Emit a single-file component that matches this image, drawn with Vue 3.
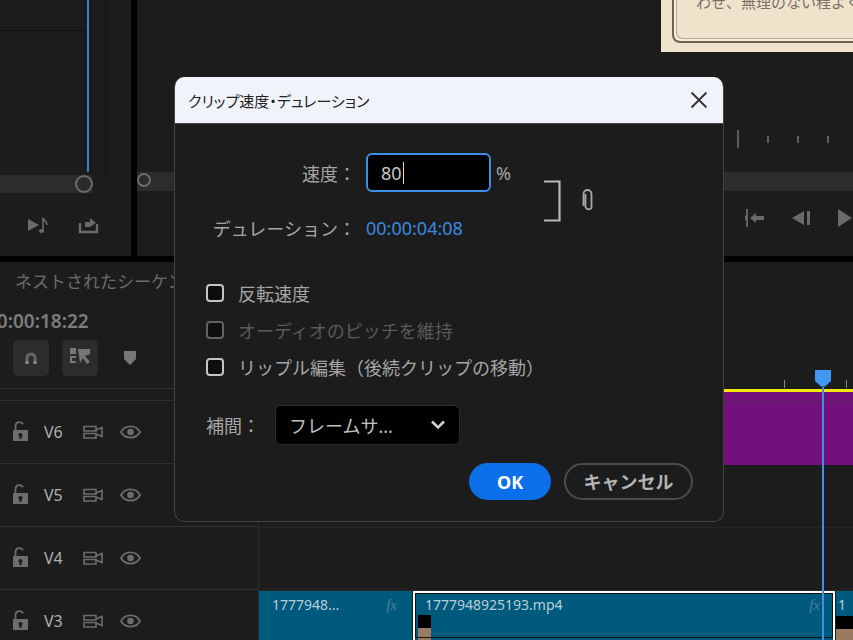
<template>
  <div class="screen">
    <div class="top">
      <section class="source">
        <div class="source-view">
          <div class="source-rule"></div>
          <div class="source-head"></div>
        </div>
        <div class="source-bar"><span class="knob"></span></div>
        <div class="source-tools">
          <svg width="22" height="20" viewBox="0 0 22 20">
            <path d="M1 4l11 6-11 6z" fill="#6a6a6a" />
            <path d="M16 16V3c1 3 4 3 4 7" fill="none" stroke="#6a6a6a" stroke-width="1.6" />
            <ellipse cx="14.5" cy="16" rx="2.5" ry="2" fill="#6a6a6a" />
          </svg>
          <svg width="21" height="18" viewBox="0 0 21 18">
            <path d="M2 7v9h17V8" fill="none" stroke="#6a6a6a" stroke-width="2.4" />
            <path d="M7 11V6h5V2l6 5-6 4z" fill="#6a6a6a" />
          </svg>
        </div>
      </section>
      <section class="program">
        <div class="program-view">
          <div class="paper">
            <div class="paper-frame"><span class="paper-text">わせ、無理のない程よく調整</span></div>
          </div>
        </div>
        <div class="ruler">
          <i class="tick tall"></i>
          <i v-for="n in ticks" :key="n" class="tick"></i>
        </div>
        <div class="program-bar"><span class="knob"></span></div>
        <div class="program-tools">
          <svg width="20" height="20" viewBox="0 0 20 20">
            <path d="M2 1v18M2 10l-2-2M2 10l-2 2" fill="none" stroke="#6a6a6a" stroke-width="1.8" />
            <path d="M5 10l6-5v3h8v4h-8v3z" fill="#6a6a6a" />
          </svg>
          <svg width="19" height="14" viewBox="0 0 19 14">
            <path d="M0 7l12-7v14z" fill="#6a6a6a" />
            <rect x="15" width="3" height="14" fill="#6a6a6a" />
          </svg>
          <svg width="14" height="18" viewBox="0 0 14 18">
            <path d="M0 0l14 9-14 9z" fill="#6a6a6a" />
          </svg>
        </div>
      </section>
    </div>

    <section class="bottom">
      <aside class="headers">
        <div class="tab">ネストされたシーケンス</div>
        <div class="timecode">00:00:18:22</div>
        <div class="tools">
          <span class="tool-btn">
            <svg width="16" height="16" viewBox="0 0 16 16">
              <path d="M2.5 14V8a5.500 5.500 0 0 1 11 0v6h-3V8a2.500 2.500 0 0 0-5 0v6z" fill="#666" />
              <path d="M2.500 11h3v3h-3zM10.500 11h3v3h-3z" fill="#8a8a8a" />
            </svg>
          </span>
          <span class="tool-btn">
            <svg width="24" height="24" viewBox="0 0 24 24">
              <rect x="2" y="2" width="6" height="6" fill="#777" />
              <path d="M2 10h6v2H4v3h4v2H2z" fill="#777" />
              <path d="M10 3l12 0v5l-5 2 5 6-3 2-4-6-3 5z" fill="#777" />
            </svg>
          </span>
          <svg class="marker" width="14" height="16" viewBox="0 0 14 16">
            <path d="M1 1h12v8l-6 6-6-6z" fill="#777" />
          </svg>
        </div>
        <div class="track-rule"></div>
        <div v-for="t in tracks" :key="t" class="track">
          <svg width="17" height="22" viewBox="0 0 17 22">
            <path d="M3.500 9V5a4 4 0 0 1 7.500-1.800" fill="none" stroke="#6d6d6d" stroke-width="1.800" />
            <path d="M1 9h15v11H1z" fill="#6d6d6d" />
            <circle cx="8.500" cy="14" r="2" fill="#1c1c1c" />
            <rect x="7.500" y="14" width="2" height="4" fill="#1c1c1c" />
          </svg>
          <span class="track-name">{{ t }}</span>
          <svg width="20" height="15" viewBox="0 0 20 15">
            <path d="M1 1.500h12v4.500H1zM1 8.500h12V13H1zM13 5l6-2.500v9L13 9" fill="none" stroke="#6d6d6d" stroke-width="1.600" />
          </svg>
          <svg width="21" height="14" viewBox="0 0 21 14">
            <path d="M1 7c4-7.500 15-7.500 19 0-4 7.500-15 7.500-19 0z" fill="none" stroke="#6d6d6d" stroke-width="1.800" />
            <circle cx="10.500" cy="7" r="3.300" fill="#6d6d6d" />
          </svg>
        </div>
      </aside>

      <div class="timeline">
        <div class="time-ruler">
          <i class="rt" style="left: 525px"></i>
          <i class="rt" style="left: 587px"></i>
        </div>
        <div class="work-bar"></div>
        <div class="band-v6"><div class="band-line"></div></div>
        <div class="spacer-v5"></div>
        <div class="spacer-v4"></div>
        <div class="clips">
          <div class="clip first">
            <span>1777948...</span><em>fx</em>
          </div>
          <div class="clip picked">
            <div class="clip-title"><span>1777948925193.mp4</span><em>fx</em></div>
            <div class="thumb"></div>
          </div>
          <div class="clip next"><span>1</span><div class="thumb"></div></div>
        </div>
        <div class="playhead">
          <svg width="18" height="17" viewBox="0 0 18 17">
            <path d="M1 0h16v11l-6 5.500H7L1 11z" fill="#3f98f4" />
          </svg>
          <div class="playhead-line"></div>
        </div>
      </div>
    </section>

    <div class="dialog">
      <header class="dialog-title">
        <span>クリップ速度・デュレーション</span>
        <svg width="18" height="18" viewBox="0 0 18 18">
          <path d="M1.500 1.500l15 15M16.500 1.500l-15 15" fill="none" stroke="#333" stroke-width="1.800" />
        </svg>
      </header>
      <div class="dialog-body">
        <div class="speed">
          <div class="speed-grid">
            <label>速度：</label>
            <div class="speed-input">
              <div class="input-box">80<i class="caret"></i></div>
              <span>%</span>
            </div>
            <label>デュレーション：</label>
            <div class="duration">00:00:04:08</div>
          </div>
          <svg class="bracket" width="17" height="42" viewBox="0 0 17 42">
            <path d="M0 1.500h15.500v39H0" fill="none" stroke="#b8b8b8" stroke-width="2.200" />
          </svg>
          <svg class="link" width="12" height="24" viewBox="0 0 12 24">
            <path d="M3.500 6v13a3.500 3.500 0 0 0 6 1V6a4 4 0 0 0-8 0v12" fill="none" stroke="#a8a8a8" stroke-width="1.800" />
          </svg>
        </div>

        <div class="checks">
          <div v-for="c in checks" :key="c.text" class="check" :class="{ off: c.off }">
            <span class="box"></span>
            <span>{{ c.text }}</span>
          </div>
        </div>

        <div class="interp">
          <label>補間：</label>
          <div class="select">
            <span>フレームサ...</span>
            <svg width="16" height="10" viewBox="0 0 16 10">
              <path d="M2 1.500l6 6 6-6" fill="none" stroke="#d0d0d0" stroke-width="2.600" />
            </svg>
          </div>
        </div>

        <div class="actions">
          <button class="btn ok">OK</button>
          <button class="btn cancel">キャンセル</button>
        </div>
      </div>
    </div>
  </div>
</template>

<script setup>
const ticks = [1, 2, 3, 4]
const tracks = ['V6', 'V5', 'V4', 'V3']
const checks = [
  { text: '反転速度' },
  { text: 'オーディオのピッチを維持', off: true },
  { text: 'リップル編集（後続クリップの移動）' },
]
</script>

<style>
html, body {
  margin: 0;
  background: #000;
}
</style>

<style scoped>
.screen {
  position: relative;
  width: 853px;
  height: 640px;
  overflow: hidden;
  background: #000;
  font-family: "Noto Sans", "Noto Sans CJK JP", sans-serif;
  color: #aaa;
}

.top {
  display: flex;
  gap: 6px;
  height: 256px;
}

.source {
  width: 131px;
  background: #1c1c1c;
  flex-shrink: 0;
}

.source-view {
  position: relative;
  width: 106px;
  height: 175px;
  border-right: 1px solid #141414;
  box-sizing: border-box;
}

.source-rule {
  height: 30px;
  border-bottom: 1px solid #111;
  width: 92px;
}

.source-head {
  position: absolute;
  left: 87px;
  top: 0;
  width: 2px;
  height: 172px;
  background: #3a7fd0;
}

.source-bar {
  position: relative;
  width: 92px;
  height: 18px;
  background: #2c2c2c;
}

.knob {
  position: absolute;
  width: 14px;
  height: 14px;
  border: 2px solid #6c6c6c;
  border-radius: 50%;
  box-sizing: border-box;
  top: 1px;
}

.source-bar .knob {
  left: 75px;
  width: 18px;
  height: 18px;
  top: 0;
}

.source-tools {
  display: flex;
  align-items: center;
  gap: 29px;
  padding: 22px 0 0 27px;
}

.program {
  flex: 1;
  background: #1c1c1c;
  min-width: 0;
}

.program-view {
  display: flex;
  justify-content: flex-end;
  height: 130px;
}

.paper {
  width: 192px;
  height: 52px;
  box-sizing: border-box;
  padding: 0 0 9px 11px;
  background: #efe3cc;
  overflow: hidden;
}

.paper-frame {
  height: 100%;
  border: solid #6f6350;
  border-width: 0 0 2px 2px;
  border-radius: 0 0 0 8px;
  box-sizing: border-box;
  box-shadow: inset 2px -2px 0 #f6efdf, inset 3px -3px 0 #b5ac9b;
  padding-left: 22px;
  white-space: nowrap;
  overflow: hidden;
}

.paper-text {
  display: block;
  margin-top: -8px;
  font-size: 15px;
  line-height: 20px;
  color: #77706a;
}

.ruler {
  display: flex;
  align-items: center;
  gap: 28px;
  height: 18px;
  padding-left: 600px;
}

.tick {
  width: 2px;
  height: 7px;
  background: #5e5e5e;
  flex-shrink: 0;
}

.tick.tall {
  height: 18px;
}

.program-bar {
  margin-top: 24px;
  height: 19px;
  background: #2c2c2c;
  position: relative;
}

.program-tools {
  display: flex;
  align-items: center;
  gap: 27px;
  padding: 17px 0 0 608px;
}

.bottom {
  display: flex;
  margin-top: 6px;
  height: 378px;
  background: #1c1c1c;
}

.headers {
  width: 258px;
  flex-shrink: 0;
  border-right: 1px solid #2a2a2a;
  box-sizing: content-box;
}

.tab {
  padding: 8px 0 0 15px;
  height: 29px;
  font-size: 17px;
  line-height: 24px;
  color: #6c6c6c;
  white-space: nowrap;
}

.timecode {
  margin-left: -14px;
  margin-top: 7px;
  height: 30px;
  font-size: 19px;
  line-height: 30px;
  font-weight: 600;
  color: #7d7d7d;
  white-space: nowrap;
}

.tools {
  display: flex;
  align-items: center;
  gap: 13px;
  height: 36px;
  margin-top: 4px;
  padding-left: 13px;
}

.tool-btn {
  display: flex;
  align-items: center;
  justify-content: center;
  width: 36px;
  height: 36px;
  border-radius: 5px;
  background: #2c2c2c;
}

.marker {
  margin-left: 12px;
}

.track-rule {
  height: 11px;
  margin-top: 12px;
  border-top: 1px solid #303030;
}

.track {
  display: flex;
  align-items: center;
  height: 62px;
  border-top: 1px solid #303030;
  padding-left: 12px;
}

.track-name {
  width: 39px;
  margin-left: 15px;
  font-size: 16px;
  color: #b0b0b0;
}

.track svg:last-child {
  margin-left: 17px;
}

.timeline {
  position: relative;
  flex: 1;
  min-width: 0;
}

.time-ruler {
  position: relative;
  height: 127px;
}

.rt {
  position: absolute;
  bottom: 1px;
  width: 1px;
  height: 8px;
  background: #888;
}

.work-bar {
  height: 3px;
  background: #f2e800;
}

.band-v6 {
  height: 73px;
  background: #74107e;
}

.band-line {
  height: 9px;
  border-bottom: 1px solid #5d2a66;
}

.spacer-v5,
.spacer-v4 {
  height: 63px;
  border-bottom: 1px solid #262626;
  box-sizing: border-box;
}

.clips {
  display: flex;
  height: 49px;
  gap: 1px;
}

.clip {
  position: relative;
  background: #005a7e;
  font-size: 14px;
  line-height: 20px;
  color: #b9cdd6;
  box-sizing: border-box;
  overflow: hidden;
}

.clip em {
  font-family: "Liberation Serif", serif;
  font-size: 15px;
  color: #4d7f97;
}

.first {
  display: flex;
  justify-content: space-between;
  width: 153px;
  padding: 4px 15px 0 13px;
}

.picked {
  width: 422px;
  border: solid #fff;
  border-width: 2px 2px 0;
  padding: 2px 0 0 3px;
  outline: 1px solid #111;
  outline-offset: -3px;
}

.clip-title {
  display: flex;
  justify-content: space-between;
  padding: 0 13px 0 7px;
  height: 20px;
}

.thumb {
  width: 13px;
  height: 25px;
  background: linear-gradient(#000 0 13px, #9a7a60 13px);
}

.next {
  flex: 1;
  padding: 4px 0 0 2px;
}

.next .thumb {
  margin: 1px 0 0 -2px;
  width: 20px;
}

.playhead {
  position: absolute;
  left: 555px;
  top: 108px;
  display: flex;
  flex-direction: column;
  align-items: center;
  width: 18px;
}

.playhead-line {
  width: 1.500px;
  height: 255px;
  background: #3f8fe8;
}

.dialog {
  position: absolute;
  left: 174px;
  top: 77px;
  width: 550px;
  height: 445px;
  display: flex;
  flex-direction: column;
  box-sizing: border-box;
  border-radius: 10px;
  overflow: hidden;
  border: 1px solid #424242;
  border-top: 0;
  background: #1c1c1c;
}

.dialog-title {
  display: flex;
  align-items: center;
  justify-content: space-between;
  flex-shrink: 0;
  height: 47px;
  padding: 0 15px 0 13px;
  background: #f0f3f9;
  border-bottom: 1px solid #444;
  box-sizing: border-box;
  color: #222;
  font-size: 15px;
  font-feature-settings: "palt";
  white-space: nowrap;
}

.dialog-body {
  flex: 1;
  padding: 29px 30px 0 31px;
  font-size: 18px;
  color: #a6a6a6;
}

.speed {
  display: flex;
  height: 95px;
}

.speed-grid {
  display: grid;
  grid-template-columns: 150px auto;
  grid-template-rows: 39px 38px;
  column-gap: 10px;
  row-gap: 17px;
  align-items: center;
}

.speed-grid label {
  text-align: right;
  white-space: nowrap;
}

.speed-input {
  display: flex;
  align-items: center;
  gap: 5px;
}

.input-box {
  display: flex;
  align-items: center;
  box-sizing: border-box;
  width: 125px;
  height: 39px;
  padding-left: 13px;
  border: 2px solid #3a8fe8;
  border-radius: 6px;
  background: #000;
  color: #c6c6c6;
}

.caret {
  width: 1.500px;
  height: 22px;
  background: #ddd;
  margin-left: 1px;
}

.duration {
  color: #3a8ae0;
  white-space: nowrap;
}

.bracket {
  margin: 27px 0 0 33px;
}

.link {
  margin: 35px 0 0 21px;
}

.checks {
  display: flex;
  flex-direction: column;
  gap: 11px;
  margin-top: 32px;
}

.check {
  display: flex;
  align-items: center;
  gap: 14px;
  height: 26px;
  white-space: nowrap;
}

.check.off {
  color: #5a5a5a;
}

.box {
  width: 18px;
  height: 18px;
  box-sizing: border-box;
  border: 2.500px solid #c4c4c4;
  border-radius: 4px;
  background: #0d0d0d;
}

.off .box {
  border-color: #626262;
}

.interp {
  display: flex;
  align-items: center;
  gap: 15px;
  margin-top: 25px;
}

.select {
  display: flex;
  align-items: center;
  justify-content: space-between;
  box-sizing: border-box;
  width: 185px;
  height: 40px;
  padding: 0 13px 0 13px;
  background: #000;
  border: 1px solid #2b2b2b;
  border-radius: 6px;
  color: #c0c0c0;
}

.actions {
  display: flex;
  justify-content: flex-end;
  gap: 13px;
  margin-top: 18px;
}

.btn {
  height: 37px;
  border-radius: 19px;
  font-family: inherit;
  font-size: 18px;
  font-weight: 700;
  padding: 0;
  line-height: 1;
}

.ok {
  width: 82px;
  border: 0;
  background: #0a6fe8;
  color: #fff;
}

.cancel {
  width: 129px;
  border: 2.500px solid #4b4b4b;
  background: transparent;
  color: #b4b4b4;
}
</style>
